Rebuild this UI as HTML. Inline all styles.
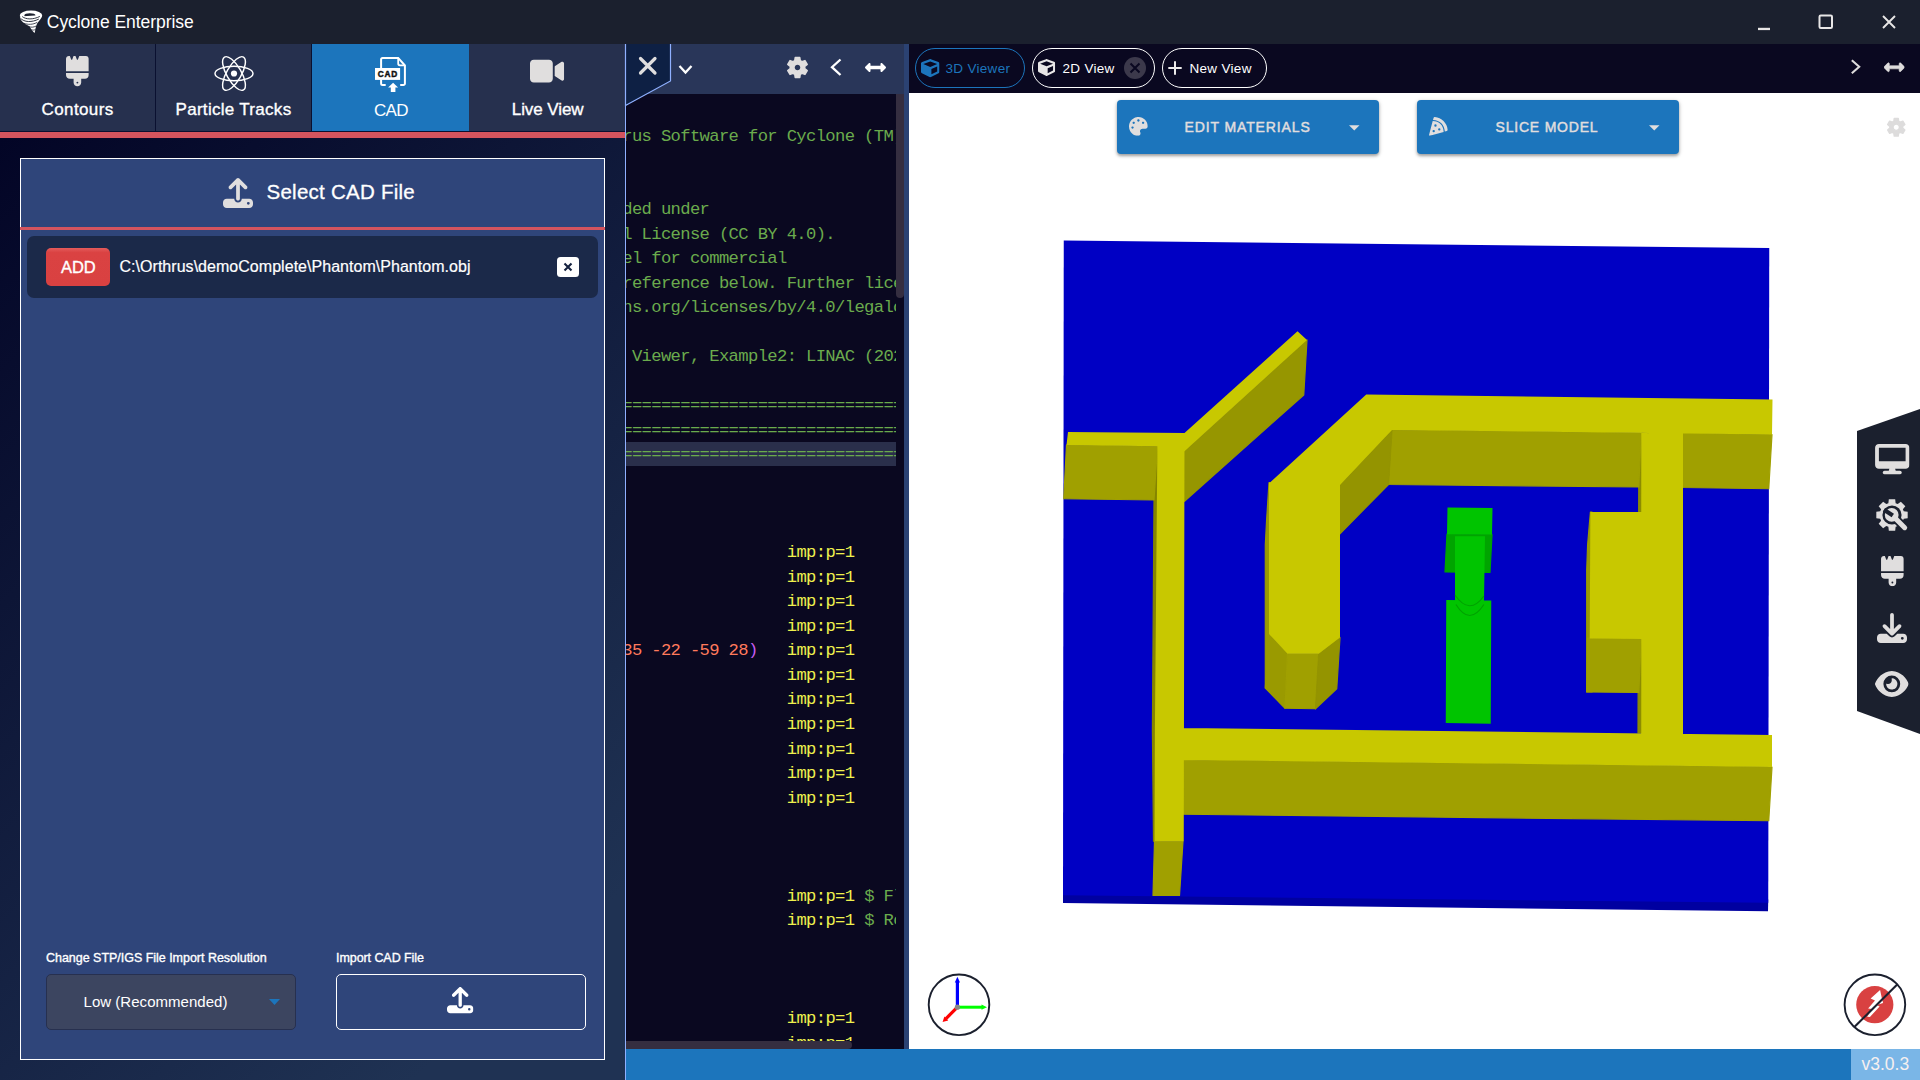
<!DOCTYPE html>
<html lang="en">
<head>
<meta charset="utf-8">
<title>Cyclone Enterprise</title>
<style>
*{box-sizing:border-box;margin:0;padding:0}
html,body{width:1920px;height:1080px;overflow:hidden;background:#fff}
body{font-family:"Liberation Sans",sans-serif;color:#fff;position:relative}
.abs{position:absolute}
svg{display:block;position:absolute;overflow:visible}
.t{position:absolute;white-space:nowrap;line-height:1}
/* title bar */
#titlebar{left:0;top:0;width:1920px;height:44px;background:#1b202e}
/* left panel */
#left{left:0;top:44px;width:626px;height:1036px;background:linear-gradient(138deg,#030526 6%,#1f3253 88%)}
#tabs{left:0;top:0;width:626px;height:88px;background:#0a1030}
.tab{position:absolute;top:0;height:87px;background:#26304e}
.tab.on{background:#1c75bc}
#redline{left:0;top:88px;width:626px;height:6px;background:#d4545e}
#card{left:20px;top:114px;width:585px;height:902px;background:#2f457a;border:1px solid #fff}
/* editor */
#editor{left:626px;top:44px;width:278px;height:1005px;background:#0a0820}
#code{left:0;top:50px;width:270.200px;height:947px;overflow:hidden}
.ln{position:absolute;font-family:"Liberation Mono",monospace;font-size:17.200px;letter-spacing:-0.640px;line-height:20px;margin-top:-13.500px;white-space:pre}
#edbar{left:0;top:0;width:278px;height:50px;background:#293659}
#split{left:904px;top:44px;width:5px;height:1005px;background:#2b4273}
/* viewer */
#vtabs{left:909px;top:44px;width:1011px;height:49px;background:#0a0820}
#view{left:909px;top:93px;width:1011px;height:956px;background:#fff}
#status{left:626px;top:1049px;width:1294px;height:31px;background:#1c75bc}
#ver{left:1851px;top:1049px;width:69px;height:31px;background:#7ab6e7}
.sb{-webkit-text-stroke:0.350px #fff}
.pill{position:absolute;height:40px;border:1px solid #fff;border-radius:20px}
.btn{position:absolute;width:262px;height:54px;border-radius:4px;background:#1c75bc;box-shadow:0 2px 3px rgba(0,0,0,.3),0 1px 5px rgba(0,0,0,.16)}
.bt{font-size:14px;letter-spacing:0.880px;color:#e0dede;-webkit-text-stroke:0.450px #e0dede}
.mono{font-family:"Liberation Mono",monospace}
</style>
</head>
<body>

<svg width="0" height="0" style="position:absolute;left:-10px;top:-10px">
<defs>
<symbol id="i-brush" viewBox="0 0 384 512"><path d="M162 6c-1.500-3.600-5-6-8.900-6h-19c-3.900 0-7.500 2.400-8.900 6L104.900 57.700c-3.200 8-14.600 8-17.800 0L66.400 6c-1.500-3.600-5-6-8.900-6H48C21.500 0 0 21.500 0 48v208h384V48c0-26.500-21.500-48-48-48H230.500c-3.900 0-7.500 2.400-8.900 6l-20.700 51.700c-3.200 8-14.600 8-17.800 0L162 6zM0 288v32c0 35.300 28.700 64 64 64h64v64c0 35.300 28.700 64 64 64s64-28.700 64-64v-64h64c35.300 0 64-28.700 64-64v-32H0zm192 144a16 16 0 1 1 0 32 16 16 0 1 1 0-32z"/></symbol>
<symbol id="i-upload" viewBox="0 0 512 512"><path d="M288 109.300V352c0 17.700-14.300 32-32 32s-32-14.300-32-32V109.300l-73.400 73.400c-12.500 12.500-32.800 12.500-45.300 0s-12.500-32.800 0-45.300l128-128c12.500-12.500 32.800-12.500 45.300 0l128 128c12.500 12.500 12.500 32.800 0 45.300s-32.800 12.500-45.300 0L288 109.300zM64 352h128c0 35.300 28.700 64 64 64s64-28.700 64-64h128c35.300 0 64 28.700 64 64v32c0 35.300-28.700 64-64 64H64c-35.300 0-64-28.700-64-64v-32c0-35.300 28.700-64 64-64zm368 104a24 24 0 1 0 0-48 24 24 0 1 0 0 48z"/></symbol>
<symbol id="i-download" viewBox="0 0 512 512"><path d="M288 32c0-17.700-14.300-32-32-32s-32 14.300-32 32v242.700l-73.400-73.400c-12.500-12.500-32.800-12.500-45.300 0s-12.500 32.800 0 45.300l128 128c12.500 12.500 32.800 12.500 45.300 0l128-128c12.500-12.500 12.500-32.800 0-45.300s-32.800-12.500-45.300 0L288 274.700V32zM64 352c-35.300 0-64 28.700-64 64v32c0 35.300 28.700 64 64 64h384c35.300 0 64-28.700 64-64v-32c0-35.300-28.700-64-64-64H346.500l-45.300 45.300c-25 25-65.500 25-90.500 0L165.500 352H64zm368 56a24 24 0 1 1 0 48 24 24 0 1 1 0-48z"/></symbol>
<symbol id="i-video" viewBox="0 0 576 512"><path d="M0 128C0 92.700 28.700 64 64 64h256c35.300 0 64 28.700 64 64v256c0 35.300-28.700 64-64 64H64c-35.300 0-64-28.700-64-64V128zM559.100 99.800c10.400 5.600 16.900 16.400 16.900 28.200v256c0 11.800-6.500 22.600-16.900 28.200s-23 5-32.900-1.600l-96-64-14.200-9.500V174.900l14.200-9.500 96-64c9.800-6.500 22.400-7.200 32.900-1.600z"/></symbol>
<symbol id="i-cube" viewBox="0 0 512 512"><path d="M239.100 6.300l-208 78c-18.700 7-31.100 25-31.100 45v225.100c0 18.200 10.300 34.800 26.500 42.900l208 104c13.500 6.800 29.400 6.800 42.900 0l208-104c16.300-8.100 26.500-24.800 26.500-42.900V129.300c0-20-12.400-37.900-31.100-44.900l-208-78C262 2.200 250 2.200 239.100 6.300zM256 68.400l192 72v1.100l-192 78-192-78v-1.100l192-72zm32 356V275.500l160-65v133.900l-160 80z"/></symbol>
<symbol id="i-palette" viewBox="0 0 512 512"><path d="M204.300 5C104.900 24.400 24.800 104.300 5.200 203.400c-37 187 131.700 326.400 258.800 306.700 41.200-6.400 61.400-54.600 42.500-91.700-23.100-45.400 9.900-98.400 60.900-98.400h79.700c35.800 0 64.800-29.600 64.900-65.300C511.500 97.100 368.100-26.900 204.300 5zM96 320c-17.700 0-32-14.300-32-32s14.300-32 32-32 32 14.300 32 32-14.300 32-32 32zm32-128c-17.700 0-32-14.300-32-32s14.300-32 32-32 32 14.300 32 32-14.300 32-32 32zm128-64c-17.700 0-32-14.300-32-32s14.300-32 32-32 32 14.300 32 32-14.300 32-32 32zm128 64c-17.700 0-32-14.300-32-32s14.300-32 32-32 32 14.300 32 32-14.300 32-32 32z"/></symbol>
<symbol id="i-pizza" viewBox="0 0 512 512"><path d="M158.870.15c-16.160-1.520-31.200 8.420-35.330 24.120l-14.810 56.270c187.620 5.490 314.540 130.610 322.480 317l56.940-15.780c15.720-4.360 25.490-19.680 23.620-35.900C490.890 165.080 340.780 17.320 158.870.15zm-58.470 112L.55 491.640a16.210 16.210 0 0 0 20 19.750l379-105.100c-4.270-174.890-123.080-292.140-299.150-294.100zM128 416a32 32 0 1 1 32-32 32 32 0 0 1-32 32zm48-152a32 32 0 1 1 32-32 32 32 0 0 1-32 32zm104 104a32 32 0 1 1 32-32 32 32 0 0 1-32 32z"/></symbol>
<symbol id="i-desktop" viewBox="0 0 576 512"><path d="M64 0C28.700 0 0 28.700 0 64v288c0 35.300 28.700 64 64 64h176l-10.700 32H160c-17.700 0-32 14.300-32 32s14.300 32 32 32h256c17.700 0 32-14.300 32-32s-14.300-32-32-32h-69.300L336 416h176c35.300 0 64-28.700 64-64V64c0-35.300-28.700-64-64-64H64zm448 64v224H64V64h448z"/></symbol>
<symbol id="i-eye" viewBox="0 0 576 512"><path d="M288 32c-80.800 0-145.500 36.800-192.600 80.600C48.600 156 17.300 208 2.500 243.700c-3.300 7.900-3.300 16.700 0 24.600C17.300 304 48.600 356 95.400 399.400 142.500 443.200 207.200 480 288 480s145.500-36.800 192.600-80.600c46.800-43.500 78.100-95.400 93-131.100 3.300-7.900 3.300-16.700 0-24.600-14.900-35.700-46.200-87.700-93-131.100C433.500 68.800 368.800 32 288 32zM144 256a144 144 0 1 1 288 0 144 144 0 1 1-288 0zm144-64c0 35.300-28.700 64-64 64-7.100 0-13.900-1.200-20.300-3.300-5.500-1.800-11.900 1.600-11.700 7.400.3 6.900 1.300 13.800 3.200 20.700 13.700 51.200 66.400 81.600 117.600 67.900s81.600-66.400 67.900-117.600c-11.100-41.500-47.800-69.400-88.600-71.100-5.800-.2-9.200 6.100-7.400 11.700 2.100 6.400 3.300 13.200 3.300 20.300z"/></symbol>
<symbol id="i-arrows" viewBox="0 0 512 512"><path d="M377.941 169.941V216H134.059v-46.059c0-21.382-25.851-32.090-40.971-16.971L7.029 239.029c-9.373 9.373-9.373 24.568 0 33.941l86.059 86.059c15.119 15.119 40.971 4.411 40.971-16.971V296h243.882v46.059c0 21.382 25.851 32.090 40.971 16.971l86.059-86.059c9.373-9.373 9.373-24.568 0-33.941l-86.059-86.059c-15.119-15.120-40.971-4.412-40.971 16.970z"/></symbol>
<symbol id="i-gear" viewBox="-12 -12 24 24"><path fill-rule="evenodd" stroke-width="1.6" stroke-linejoin="round" d="M-2.87 -7.04 L-2.36 -10.33 L2.36 -10.33 L2.87 -7.04 L4.66 -6.01 L7.77 -7.21 L10.13 -3.13 L7.53 -1.03 L7.53 1.03 L10.13 3.13 L7.77 7.21 L4.66 6.01 L2.87 7.04 L2.36 10.33 L-2.36 10.33 L-2.87 7.04 L-4.66 6.01 L-7.77 7.21 L-10.13 3.13 L-7.53 1.03 L-7.53 -1.03 L-10.13 -3.13 L-7.77 -7.21 L-4.66 -6.01Z M3.700 0A3.700 3.700 0 1 0 -3.700 0A3.700 3.700 0 1 0 3.700 0Z"/></symbol>
</defs>
</svg>

<div id="titlebar" class="abs">
  <svg style="left:0;top:0" width="60" height="44" viewBox="0 0 60 44">
    <path fill="#fff" d="M19.900 16.500C20.200 21.500 25 23.800 28.500 25.800C31 27.400 31.500 30.800 34.600 33C35.600 30 35.400 26.500 37.300 23.300C39.200 20.200 42.200 18.300 42.100 15Z"/>
    <path fill="#fff" fill-rule="evenodd" d="M19.800 15.300a11.200 4.800 0 1 0 22.400 0a11.200 4.800 0 1 0 -22.400 0ZM24.300 15.500a5.600 2.300 0 1 0 11.200 0a5.600 2.300 0 1 0 -11.200 0Z"/>
    <path fill="none" stroke="#1b202e" stroke-width="0.900" stroke-linecap="round" d="M20.600 18.400C24 22.400 32 22.600 38.500 19.200M22.500 16.800C26 19.600 33 19.800 39.500 16.600"/>
    <path fill="none" stroke="#1b202e" stroke-width="0.800" stroke-linecap="round" d="M24 23.300C28 25 33 24.600 36.800 22.600M29 26.600C31 27.600 33.500 27.400 35.800 26.200M31.800 29.800c1.200 0.600 2.400 0.400 3.500 -0.300"/>
  </svg>
  <span class="t" style="left:46.800px;top:13.800px;font-size:17.500px;letter-spacing:-0.050px">Cyclone Enterprise</span>
  <svg style="left:1758px;top:27px" width="14" height="4" viewBox="0 0 14 4"><rect x="0" y="0.800" width="12" height="2.300" fill="#e8e6e6"/></svg>
  <svg style="left:1818px;top:14px" width="16" height="16" viewBox="0 0 16 16"><rect x="1.500" y="1.500" width="12.500" height="12.500" rx="1.300" fill="none" stroke="#e8e6e6" stroke-width="2"/></svg>
  <svg style="left:1881px;top:14px" width="16" height="16" viewBox="0 0 16 16"><path d="M2 2l12 12M14 2L2 14" stroke="#e8e6e6" stroke-width="1.900" stroke-linecap="butt"/></svg>
</div>

<div id="left" class="abs">
  <div id="tabs" class="abs">
    <div class="tab" style="left:0;width:155px">
      <svg style="left:66px;top:11.500px" width="22.800" height="30.400" fill="#e0dede"><use href="#i-brush"/></svg>
      <span class="t sb" style="left:41.500px;top:57px;font-size:17px;letter-spacing:0.400px">Contours</span>
    </div>
    <div class="tab" style="left:156px;width:155px">
      <svg style="left:57.500px;top:11px" width="40" height="37" viewBox="-20 -18.500 40 37" fill="none" stroke="#fff" stroke-width="1.450">
        <ellipse rx="19" ry="7.300"/><ellipse rx="19" ry="7.300" transform="rotate(60)"/><ellipse rx="19" ry="7.300" transform="rotate(120)"/><circle r="3.100" fill="#fff" stroke="none"/>
      </svg>
      <span class="t sb" style="left:19.500px;top:57px;font-size:17px;letter-spacing:0.300px">Particle Tracks</span>
    </div>
    <div class="tab on" style="left:312px;width:157px">
      <svg style="left:62px;top:12px" width="34" height="37" viewBox="0 0 34 37">
        <path d="M7.100 12.500V3.400a1.500 1.500 0 0 1 1.500-1.500H24.200l6.700 7.600V27.400a1.500 1.500 0 0 1-1.500 1.500H26.200M11.700 28.900H8.600a1.500 1.500 0 0 1-1.500-1.500V23.500" fill="none" stroke="#fff" stroke-width="2"/>
        <path d="M24.200 1.900v5.700a1.700 1.700 0 0 0 1.700 1.700h5" fill="none" stroke="#fff" stroke-width="1.800"/>
        <rect x="1" y="12" width="25.100" height="11.900" fill="#fff"/>
        <path d="M19.100 26.800l5 4.800h-2.700v4.300h-4.600v-4.300h-2.700z" fill="#fff"/>
        <text x="13.900" y="20.900" font-family="Liberation Sans, sans-serif" font-weight="700" font-size="8.300" fill="#111" stroke="#111" stroke-width="0.450" text-anchor="middle" letter-spacing="0.800">CAD</text>
      </svg>
      <span class="t" style="left:62px;top:58px;font-size:17px;letter-spacing:-0.700px">CAD</span>
    </div>
    <div class="tab" style="left:469px;width:156px">
      <svg style="left:61px;top:11.600px" width="34.200" height="30.400" fill="#e0dede"><use href="#i-video"/></svg>
      <span class="t sb" style="left:42.800px;top:57px;font-size:17px;letter-spacing:-0.080px">Live View</span>
    </div>
  </div>
  <div id="redline" class="abs"></div>
  <div id="card" class="abs">
    <svg style="left:202px;top:19px" width="30" height="30" fill="#e0dede"><use href="#i-upload"/></svg>
    <span class="t" style="left:245.500px;top:22.500px;font-size:20.500px;letter-spacing:0.250px;-webkit-text-stroke:0.300px #fff">Select CAD File</span>
    <div class="abs" style="left:-1px;top:68px;width:585px;height:3px;background:#d4545e"></div>
    <div class="abs" style="left:6px;top:77px;width:571px;height:62px;border-radius:7px;background:#1b2949">
      <div class="abs" style="left:19px;top:12px;width:64px;height:38px;border-radius:5px;background:linear-gradient(#e45b5b,#da4242 12%,#d94141)"></div>
      <span class="t sb" style="left:34px;top:23px;font-size:16.500px;letter-spacing:-0.100px">ADD</span>
      <span class="t" style="left:92.500px;top:23.200px;font-size:16px;letter-spacing:0.035px;-webkit-text-stroke:0.200px #fff">C:\Orthrus\demoComplete\Phantom\Phantom.obj</span>
      <div class="abs" style="left:529.500px;top:21.300px;width:22.500px;height:19.700px;border-radius:3.500px;background:#fff"></div>
      <svg style="left:535.800px;top:26.200px" width="10" height="10" viewBox="0 0 10 10"><path d="M1.500 1.500l7 7M8.500 1.500l-7 7" stroke="#14213f" stroke-width="2.100"/></svg>
    </div>
    <span class="t sb" style="left:25px;top:792.500px;font-size:12.500px;letter-spacing:-0.025px">Change STP/IGS File Import Resolution</span>
    <span class="t sb" style="left:315px;top:792.500px;font-size:12.500px;letter-spacing:-0.070px">Import CAD File</span>
    <div class="abs" style="left:25px;top:815px;width:250px;height:56px;border-radius:5px;background:#3c4560;border:1px solid #27304f"></div>
    <span class="t" style="left:62.500px;top:835px;font-size:15px;letter-spacing:0.035px">Low (Recommended)</span>
    <svg style="left:248px;top:840px" width="11" height="6" viewBox="0 0 11 6"><path d="M0 0h11L5.500 6z" fill="#1c75bc"/></svg>
    <div class="abs" style="left:315px;top:815px;width:249.500px;height:56px;border-radius:5px;border:1.500px solid #fff"></div>
    <svg style="left:425.600px;top:827.600px" width="26.400" height="26.400" fill="#fff"><use href="#i-upload"/></svg>
  </div>
</div>
<div id="editor" class="abs">
  <div id="edbar" class="abs"></div>
  <div id="code" class="abs mono">
    <div class="abs" style="left:0;top:347.6px;width:271px;height:24.500px;background:#2a2f4b"></div>
    <pre class="ln" style="left:-3.80px;top:46.3px;color:#6aab4d">rus Software for Cyclone (TM)</pre>
    <pre class="ln" style="left:-3.80px;top:119.8px;color:#6aab4d">ded under</pre>
    <pre class="ln" style="left:-3.80px;top:144.3px;color:#6aab4d">l License (CC BY 4.0).</pre>
    <pre class="ln" style="left:-3.80px;top:168.8px;color:#6aab4d">el for commercial</pre>
    <pre class="ln" style="left:-3.80px;top:193.3px;color:#6aab4d">reference below. Further lice</pre>
    <pre class="ln" style="left:-3.80px;top:217.8px;color:#6aab4d">ns.org/licenses/by/4.0/legalc</pre>
    <pre class="ln" style="left:-3.80px;top:266.9px;color:#6aab4d"> Viewer, Example2: LINAC (202</pre>
    <pre class="ln" style="left:-3.80px;top:315.9px;color:#6aab4d">=============================</pre>
    <pre class="ln" style="left:-3.80px;top:340.4px;color:#6aab4d">=============================</pre>
    <pre class="ln" style="left:-3.80px;top:364.9px;color:#6aab4d">=============================</pre>
    <pre class="ln" style="left:160.76px;top:462.9px;color:#eef04e">imp:p=1</pre>
    <pre class="ln" style="left:160.76px;top:487.4px;color:#eef04e">imp:p=1</pre>
    <pre class="ln" style="left:160.76px;top:511.9px;color:#eef04e">imp:p=1</pre>
    <pre class="ln" style="left:160.76px;top:536.4px;color:#eef04e">imp:p=1</pre>
    <pre class="ln" style="left:-3.80px;top:560.9px;color:#ff7a5c">35 -22 -59 28</pre>
    <pre class="ln" style="left:122.04px;top:560.9px;color:#c65cf0">)</pre>
    <pre class="ln" style="left:160.76px;top:560.9px;color:#eef04e">imp:p=1</pre>
    <pre class="ln" style="left:160.76px;top:585.4px;color:#eef04e">imp:p=1</pre>
    <pre class="ln" style="left:160.76px;top:609.9px;color:#eef04e">imp:p=1</pre>
    <pre class="ln" style="left:160.76px;top:634.4px;color:#eef04e">imp:p=1</pre>
    <pre class="ln" style="left:160.76px;top:659.0px;color:#eef04e">imp:p=1</pre>
    <pre class="ln" style="left:160.76px;top:683.5px;color:#eef04e">imp:p=1</pre>
    <pre class="ln" style="left:160.76px;top:708.0px;color:#eef04e">imp:p=1</pre>
    <pre class="ln" style="left:238.20px;top:806.0px;color:#6aab4d">$ Fl</pre>
    <pre class="ln" style="left:160.76px;top:806.0px;color:#eef04e">imp:p=1</pre>
    <pre class="ln" style="left:238.20px;top:830.5px;color:#6aab4d">$ Ro</pre>
    <pre class="ln" style="left:160.76px;top:830.5px;color:#eef04e">imp:p=1</pre>
    <pre class="ln" style="left:160.76px;top:928.5px;color:#eef04e">imp:p=1</pre>
    <pre class="ln" style="left:160.76px;top:953.0px;color:#eef04e">imp:p=1</pre>
  </div>
  <div class="abs" style="left:270.200px;top:50px;width:7.600px;height:203.800px;border-radius:0 0 4px 4px;background:#352e40"></div>
  <div class="abs" style="left:0;top:997px;width:226px;height:8px;border-radius:0 4px 4px 0;background:#352e40"></div>
  <svg style="left:-1px;top:0" width="60" height="70" viewBox="0 0 60 70"><path d="M0.500 0V61.500L45.500 37V0" fill="#0e2044" stroke="#8fb0ff" stroke-width="1.200"/><path d="M15.500 14.500l14.500 14.500M30 14.500L15.500 29" stroke="#e0dede" stroke-width="3.200" stroke-linecap="round"/></svg>
  <div class="abs" style="left:-1px;top:0;width:1.100px;height:1036px;background:#8fb0ff"></div>
  <svg style="left:52px;top:20px" width="16" height="12" viewBox="0 0 16 12"><path d="M1.500 2l6 6.500 6-6.500" fill="none" stroke="#fff" stroke-width="2.300"/></svg>
  <svg style="left:160px;top:11.500px" width="23" height="23" fill="#e0dede" stroke="#e0dede"><use href="#i-gear"/></svg>
  <svg style="left:203px;top:14px" width="14" height="18" viewBox="0 0 14 18"><path d="M11.500 1.500L3 9.200l8.500 7.800" fill="none" stroke="#fff" stroke-width="2.300"/></svg>
  <svg style="left:238.500px;top:12.700px" width="21" height="21" fill="#fff"><use href="#i-arrows"/></svg>
</div>
<div id="split" class="abs"></div>
<div id="vtabs" class="abs">
  <div class="pill" style="left:6px;top:4px;width:110px;border-color:#1c75bc"></div>
  <svg style="left:11.500px;top:15px" width="18.500" height="18.500" fill="#1c75bc"><use href="#i-cube"/></svg>
  <span class="t" style="left:36.500px;top:17.500px;font-size:13.500px;letter-spacing:0.300px;color:#1c75bc">3D Viewer</span>
  <div class="pill" style="left:123px;top:4px;width:123px"></div>
  <svg style="left:129.100px;top:14.500px" width="17.200" height="17.200" fill="#e8e6e6"><use href="#i-cube"/></svg>
  <span class="t" style="left:153.500px;top:17.500px;font-size:13.500px;letter-spacing:0.300px">2D View</span>
  <svg style="left:213.600px;top:12.300px" width="24" height="24" viewBox="0 0 24 24"><circle cx="12" cy="12" r="11" fill="#3c394b"/><path d="M7.500 7.500l9 9M16.500 7.500l-9 9" stroke="#0a0820" stroke-width="2"/></svg>
  <div class="pill" style="left:253px;top:4px;width:105px"></div>
  <svg style="left:259px;top:16.800px" width="14" height="14" viewBox="0 0 14 14"><path d="M7 0.300v13.400M0.300 7h13.400" stroke="#eceaea" stroke-width="2"/></svg>
  <span class="t" style="left:280.500px;top:17.500px;font-size:13.500px;letter-spacing:0.300px">New View</span>
  <svg style="left:940px;top:15px" width="12" height="16" viewBox="0 0 12 16"><path d="M2.800 1.300l7.400 6.500-7.400 6.500" fill="none" stroke="#dedcdc" stroke-width="2.100"/></svg>
  <svg style="left:974.500px;top:12.700px" width="20.500" height="20.500" fill="#dedcdc" stroke="#dedcdc" stroke-width="14" stroke-linejoin="round"><use href="#i-arrows"/></svg>
</div>
<div id="view" class="abs">
  <div class="btn" style="left:208px;top:7px"></div>
  <svg style="left:219.700px;top:23.800px" width="18.800" height="18.800" fill="#e0dede"><use href="#i-palette"/></svg>
  <span class="t bt" style="left:275.500px;top:27px">EDIT MATERIALS</span>
  <svg style="left:439.500px;top:31.500px" width="10.500" height="5.500" viewBox="0 0 10 5"><path d="M0 0h10L5 5z" fill="#e0dede"/></svg>
  <div class="btn" style="left:508px;top:7px"></div>
  <svg style="left:519.700px;top:23.800px" width="18.800" height="18.800" fill="#e0dede"><use href="#i-pizza"/></svg>
  <span class="t bt" style="left:586.500px;top:27px;letter-spacing:0.800px">SLICE MODEL</span>
  <svg style="left:739.500px;top:31.500px" width="10.500" height="5.500" viewBox="0 0 10 5"><path d="M0 0h10L5 5z" fill="#e0dede"/></svg>
  <svg style="left:977px;top:23.600px" width="20.500" height="20.500" fill="#dddcdc" stroke="#dddcdc"><use href="#i-gear"/></svg>
</div>

<svg id="scene" style="left:0;top:0" width="1920" height="1080" viewBox="0 0 1920 1080">
  <path fill="#0000a0" d="M1063 892 L1768.25 899.5 L1768 911.25 L1063 903Z"/>
  <path fill="#0000c4" d="M1063.75 240.5 L1769.25 248 L1768.25 902.8 L1063 895.3Z"/>
  <path fill="#848400" stroke="#848400" stroke-width="1.2" stroke-linejoin="round" d="M1160 446 L1160 841 L1153.5 841.25 L1152.4 730 L1154 500 L1157.5 446.25Z"/>
  <path fill="#9a9a00" stroke="#9a9a00" stroke-width="1.2" stroke-linejoin="round" d="M1271 482.5 L1271 690 L1265.3 688 L1265.3 545 L1266.6 520 L1269 482.5Z M1592 512 L1592 692 L1586.7 692 L1586.7 570 L1587.6 545 L1590.4 512Z"/>
  <path fill="#8c8c00" stroke="#8c8c00" stroke-width="1.2" stroke-linejoin="round" d="M1641.25 433 L1642 733 L1638 733 L1638.75 487Z"/>
  <path fill="#9a9a00" stroke="#9a9a00" stroke-width="1.2" stroke-linejoin="round" d="M1268.75 633.75 L1287.5 653.75 L1285 708.25 L1265.3 688Z"/>
  <path fill="#a0a000" stroke="#a0a000" stroke-width="1.2" stroke-linejoin="round" d="M1066.5 445 L1157.5 446.25 L1154 500 L1063.75 498.75Z M1154.5 841.25 L1183 841.25 L1179.5 895.5 L1153 895.5Z M1183.75 760 L1772 767 L1768.75 820.75 L1183.25 814.25Z M1392 430 L1641.25 433 L1638.75 487 L1388.5 484.5Z M1683 433.25 L1772 434.5 L1768.75 488.75 L1683 487.5Z M1287.5 653.75 L1318.75 653.75 L1315.5 708.75 L1285 708.25Z M1587.5 638 L1641.25 638.75 L1638.75 692.5 L1586.7 692Z"/>
  <path fill="#969600" stroke="#969600" stroke-width="1.2" stroke-linejoin="round" d="M1184.5 451.25 L1307 340 L1303.75 395 L1184.5 501.25Z"/>
  <path fill="#949400" stroke="#949400" stroke-width="1.2" stroke-linejoin="round" d="M1340 485 L1392 430 L1388.5 484.5 L1340 533.75Z M1318.75 653.75 L1340 637.5 L1336.75 688.75 L1315.5 708.75Z"/>
  <path fill="#c8c800" d="M1068 432 L1184.5 433 L1184.5 452 L1157.5 446.25 L1066.5 445Z M1157.4 433 L1184.5 433 L1183.75 841.25 L1154.5 841.25 L1154.9 730 L1156.9 500 L1157.4 446.25Z M1184.5 433 L1297.5 331.25 L1307 340 L1184.5 451.25Z M1183.75 728 L1772 735 L1772 767 L1183.75 760Z M1366.25 394.5 L1772.5 399.5 L1772 434.5 L1392 430Z M1268.75 483.75 L1366.25 394.5 L1392 430 L1340 485Z M1269 482.5 L1340 484 L1340 637.5 L1318.75 653.75 L1287.5 653.75 L1269 634Z M1590.4 512 L1644 512 L1644 638.9 L1589.7 638.4Z M1641.25 433 L1683 433.25 L1683 734.2 L1641.25 733.5Z"/>
  <path fill="#00a400" stroke="#00a400" stroke-width="1.2" stroke-linejoin="round" d="M1447 534 L1492 534.5 L1490 572.5 L1445 572Z"/>
  <path fill="#00c400" d="M1447.5 507.5 L1492.5 508 L1492 534.6 L1447 534.25Z M1455 536.25 L1485 536.25 L1484 601 L1455 601Z M1446.25 600 L1491.25 600.5 L1490.75 723.75 L1445.75 723Z"/>
  <path d="M1455,595 Q1469.5,616 1483.9,596 M1456,604.5 Q1469.5,626.5 1483.9,604.5" fill="none" stroke="#00a200" stroke-width="1.2"/>
</svg>

<svg id="sidebar" style="left:1856px;top:400px" width="64" height="340" viewBox="0 0 64 340">
  <polygon points="1,31 64,9 64,334 1,311" fill="#1b202e"/>
</svg>
<svg style="left:1874.500px;top:444px" width="34.500" height="30.500" fill="#e0dede"><use href="#i-desktop"/></svg>
<svg style="left:1875px;top:498.300px" width="34" height="34" viewBox="-17 -17 34 34">
  <path fill="#e0dede" fill-rule="evenodd" d="M-3.64 -11.75 L-3.18 -15.68 L3.18 -15.68 L3.64 -11.75 L5.73 -10.88 L8.84 -13.34 L13.34 -8.84 L10.88 -5.73 L11.75 -3.64 L15.68 -3.18 L15.68 3.18 L11.75 3.64 L10.88 5.73 L13.34 8.84 L8.84 13.34 L5.73 10.88 L3.64 11.75 L3.18 15.68 L-3.18 15.68 L-3.64 11.75 L-5.73 10.88 L-8.84 13.34 L-13.34 8.84 L-10.88 5.73 L-11.75 3.64 L-15.68 3.18 L-15.68 -3.18 L-11.75 -3.64 L-10.88 -5.73 L-13.34 -8.84 L-8.84 -13.34 L-5.73 -10.88Z M9.600 0A9.600 9.600 0 1 0 -9.600 0A9.600 9.600 0 1 0 9.600 0Z"/>
  <path d="M2 2L12.700 12.700" stroke="#1b202e" stroke-width="8.600" stroke-linecap="round"/>
  <path d="M2 2L12.700 12.700" stroke="#e0dede" stroke-width="5" stroke-linecap="round"/>
  <circle cx="-0.300" cy="-0.100" r="6.900" fill="#e0dede"/>
  <path d="M-8 -5.200L0.800 0.600" stroke="#1b202e" stroke-width="4.200"/>
</svg>
<svg style="left:1881px;top:555.700px" width="22.800" height="30.300" fill="#e0dede"><use href="#i-brush"/></svg>
<svg style="left:1876.700px;top:613px" width="30" height="30" fill="#e0dede"><use href="#i-download"/></svg>
<svg style="left:1875.300px;top:669.200px" width="33.600" height="29.900" fill="#e0dede"><use href="#i-eye"/></svg>

<svg style="left:926px;top:972px" width="66" height="66" viewBox="926 972 66 66">
  <circle cx="959" cy="1004.800" r="30.300" fill="#fff" stroke="#1b202e" stroke-width="1.900"/>
  <path d="M957.400 1007.200V982" stroke="#0000ff" stroke-width="3.200"/><path d="M954.800 982.500h5.200l-2.600-5.800z" fill="#0000ff"/>
  <path d="M957.400 1007.200H982" stroke="#00ff00" stroke-width="3"/><path d="M981.500 1004.600v5.200l5.500-2.600z" fill="#00ff00"/>
  <path d="M957.400 1007.200L946 1018.600" stroke="#ff0000" stroke-width="3.200"/><path d="M944.400 1016.600l3.800 3.800-5.600 1.600z" fill="#ff0000"/>
  <circle cx="957.400" cy="1007.200" r="2.600" fill="#888"/>
</svg>
<svg style="left:1842px;top:972px" width="66" height="66" viewBox="1842 972 66 66">
  <circle cx="1874.900" cy="1004.800" r="30.300" fill="#fff" stroke="#1b202e" stroke-width="1.900"/>
  <circle cx="1874.800" cy="1004.700" r="18.600" fill="#d94141"/>
  <path d="M1880.100 990L1870.600 998.500L1875 1000.400L1868.100 1008.500L1872.200 1008.900L1867.100 1016.800L1869.900 1017L1879.600 1006.400L1876.600 1005L1883.100 1002.900L1881.900 998.500Z" fill="#fff"/>
  <path d="M1854.600 1026.800L1897.700 983.900" stroke="#1b202e" stroke-width="2.100"/>
</svg>
<div id="status" class="abs"></div>
<div id="ver" class="abs"><span class="t" style="left:10.500px;top:6.600px;font-size:17.500px;color:#f6f0f0">v3.0.3</span></div>
</body>
</html>
